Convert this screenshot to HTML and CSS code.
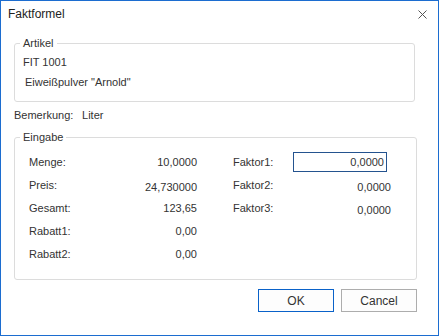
FILE: index.html
```html
<!DOCTYPE html>
<html lang="de">
<head>
  <meta charset="UTF-8" />
  <title>Faktformel</title>
  <link rel="stylesheet" href="styles.css">
</head>
<body>
  <div class="window">
    <div class="titlebar">
      <span class="title">Faktformel</span>
      <svg class="close" width="9" height="9" viewBox="0 0 9 9">
        <path d="M0.5 0.5 L8.5 8.5 M8.5 0.5 L0.5 8.5" stroke="#555" stroke-width="1" fill="none" />
      </svg>
    </div>

    <div class="content">
      <fieldset class="group artikel">
        <legend>Artikel</legend>
        <div class="line">FIT 1001</div>
        <div class="line indent">Eiweißpulver "Arnold"</div>
      </fieldset>

      <div class="remark">
        <span class="remark-label">Bemerkung:</span>
        <span>Liter</span>
      </div>

      <fieldset class="group eingabe">
        <legend>Eingabe</legend>
        <div class="grid">
          <div class="lbl">Menge:</div>
          <div class="val">10,0000</div>
          <div class="lbl2">Faktor1:</div>
          <div class="val"><input class="factor" type="text" value="0,0000"></div>

          <div class="lbl">Preis:</div>
          <div class="val low">24,730000</div>
          <div class="lbl2">Faktor2:</div>
          <div class="val low">0,0000</div>

          <div class="lbl">Gesamt:</div>
          <div class="val">123,65</div>
          <div class="lbl2">Faktor3:</div>
          <div class="val low">0,0000</div>

          <div class="lbl">Rabatt1:</div>
          <div class="val">0,00</div>
          <div></div>
          <div></div>

          <div class="lbl">Rabatt2:</div>
          <div class="val">0,00</div>
          <div></div>
          <div></div>
        </div>
      </fieldset>

      <div class="buttons">
        <button class="btn btn-default">OK</button>
        <button class="btn">Cancel</button>
      </div>
    </div>
  </div>
</body>
</html>
```

FILE: styles.css
```css
body {
  margin: 0;
  font-family: "Liberation Sans", Arial, sans-serif;
  font-size: 11px;
  color: #333;
  background: #fff;
}
.window {
  width: 439px;
  height: 336px;
  box-sizing: border-box;
  border: 1px solid #1c6dd0;
  background: #fff;
}
.titlebar {
  height: 26px;
  display: flex;
  align-items: center;
  justify-content: space-between;
  padding: 0 11px 0 7px;
}
.title {
  font-size: 12px;
  color: #222;
}
.close {
  display: block;
}
.content {
  padding: 0 21px 0 13px;
}
.group {
  margin: 0;
  border: 1px solid #dcdcdc;
  border-radius: 3px;
  padding: 2px 8px 9px 8px;
}
.group legend {
  padding: 0 3px;
  margin-left: -3px;
  line-height: 14px;
  color: #333;
}
.artikel {
  margin-top: 9px;
  margin-right: 2px;
}
.line {
  line-height: 20px;
}
.indent {
  padding-left: 2px;
}
.remark {
  margin-top: 5px;
  line-height: 16px;
}
.remark-label {
  display: inline-block;
  width: 65px;
}
.eingabe {
  margin-top: 7px;
  padding: 6px 8px 14px 8px;
}
.grid {
  display: grid;
  grid-template-columns: 60px 108px 96px 98px;
  grid-auto-rows: 23px;
  padding-left: 6px;
  align-items: center;
}
.lbl2 {
  padding-left: 36px;
}
.val {
  text-align: right;
}
.low {
  padding-top: 4px;
}
.factor {
  display: block;
  width: 94px;
  height: 20px;
  box-sizing: border-box;
  border: 1px solid #24538f;
  padding: 0 2px;
  margin: 0 4px 0 0;
  text-align: right;
  font-family: inherit;
  font-size: 11px;
  color: #333;
  outline: none;
}
.buttons {
  display: flex;
  justify-content: flex-end;
  gap: 7px;
  margin-top: 9px;
}
.btn {
  width: 76px;
  height: 23px;
  box-sizing: border-box;
  border: 1px solid #adadad;
  background: #fdfdfd;
  font-family: inherit;
  font-size: 12px;
  color: #333;
  padding: 0;
}
.btn-default {
  border-color: #0a62c9;
}
```
